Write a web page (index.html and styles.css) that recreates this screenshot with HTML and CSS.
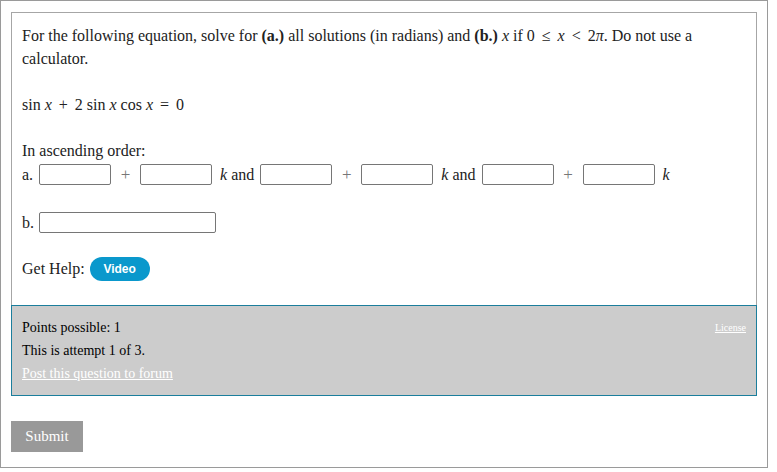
FILE: index.html
```html
<!DOCTYPE html>
<html>
<head>
<meta charset="utf-8">
<link rel="stylesheet" href="styles.css">
</head>
<body>
<div class="wrap">
  <div class="question">
    <p class="intro">For the following equation, solve for <b>(a.)</b> all solutions (in radians) and <b>(b.)</b> <i class="m">x</i> if <span class="mr">0</span> <span class="op">≤</span> <i class="m">x</i> <span class="op">&lt;</span> <span class="mr">2</span><i class="m">π</i>. Do not use a calculator.</p>
    <p class="eq"><span class="mr">sin</span> <i class="m">x</i> <span class="op">+</span> <span class="mr">2</span> <span class="mr">sin</span> <i class="m">x</i> <span class="mr">cos</span> <i class="m">x</i> <span class="op">=</span> <span class="mr">0</span></p>
    <p class="line">In ascending order:</p>
    <div class="row row-a">
      <span class="lbl">a.</span>
      <input class="box" type="text">
      <span class="plus">+</span>
      <input class="box" type="text">
      <span class="kand"><i class="k">k</i> and</span>
      <input class="box" type="text">
      <span class="plus">+</span>
      <input class="box" type="text">
      <span class="kand"><i class="k">k</i> and</span>
      <input class="box" type="text">
      <span class="plus">+</span>
      <input class="box" type="text">
      <span class="kand"><i class="k">k</i></span>
    </div>
    <div class="row row-b">
      <span class="lbl">b.</span>
      <input class="box wide" type="text">
    </div>
    <div class="row help">
      <span>Get Help:</span>
      <span class="video">Video</span>
    </div>
  </div>
  <div class="panel">
    <div class="panel-text">
      <div>Points possible: 1</div>
      <div>This is attempt 1 of 3.</div>
      <div><a href="#" class="forum">Post this question to forum</a></div>
    </div>
    <a href="#" class="license">License</a>
  </div>
  <button class="submit">Submit</button>
</div>
</body>
</html>
```

FILE: styles.css
```css
html, body {
  margin: 0;
  padding: 0;
  background: #fff;
}
body {
  font-family: "Liberation Serif", "Times New Roman", serif;
  font-size: 16px;
  color: #222;
}
.wrap {
  width: 746px;
  height: 445px;
  border: 1px solid #9a9a9a;
  padding: 11px 10px 10px 10px;
  display: flex;
  flex-direction: column;
  align-items: flex-start;
}
.question {
  align-self: stretch;
  border: 1px solid #a6a6a6;
  border-bottom: none;
  padding: 11px 10px 0 10px;
  height: 281px;
}
p {
  margin: 0;
  line-height: 23px;
}
.intro {
  margin-bottom: 23px;
}
.eq {
  margin-bottom: 23px;
}
.m {
  font-style: italic;
}
.mr {
  font-style: normal;
}
.op {
  padding: 0 3px;
}
.row {
  display: flex;
  align-items: center;
}
.row-a {
  height: 25px;
  margin-bottom: 23px;
}
.row-b {
  height: 25px;
  margin-bottom: 21px;
}
.lbl {
  margin-right: 6px;
}
.row-b .lbl {
  margin-right: 5px;
}
.box {
  width: 72px;
  height: 21px;
  box-sizing: border-box;
  border: 1px solid #767676;
  border-radius: 2px;
  padding: 0;
  margin: 0;
  background: #fff;
}
.wide {
  width: 177px;
}
.plus {
  color: #777;
  width: 29px;
  text-align: center;
  font-size: 17px;
}
.kand {
  margin: 0 6px 0 8px;
}
.k {
  color: #222;
}
.help {
  height: 25px;
}
.video {
  margin-left: 5px;
  display: inline-flex;
  align-items: center;
  justify-content: center;
  width: 60px;
  height: 24px;
  border-radius: 12px;
  background: #0a98cc;
  color: #fff;
  font-family: "Liberation Sans", Arial, sans-serif;
  font-size: 12px;
  font-weight: bold;
}
.panel {
  align-self: stretch;
  background: #cccccc;
  border: 1px solid #1b7e9c;
  padding: 10px;
  height: 69px;
  display: flex;
  justify-content: space-between;
  align-items: flex-start;
  color: #000;
  font-size: 14px;
}
.panel-text div {
  line-height: 23px;
}
.forum {
  color: #fff;
  text-decoration: underline;
}
.license {
  color: #fff;
  font-size: 10px;
  margin-top: 6px;
  text-decoration: underline;
}
.submit {
  margin-top: 25px;
  width: 72px;
  height: 31px;
  background: #999;
  color: #fff;
  border: none;
  font-family: "Liberation Serif", "Times New Roman", serif;
  font-size: 15px;
  padding: 0;
}
```
